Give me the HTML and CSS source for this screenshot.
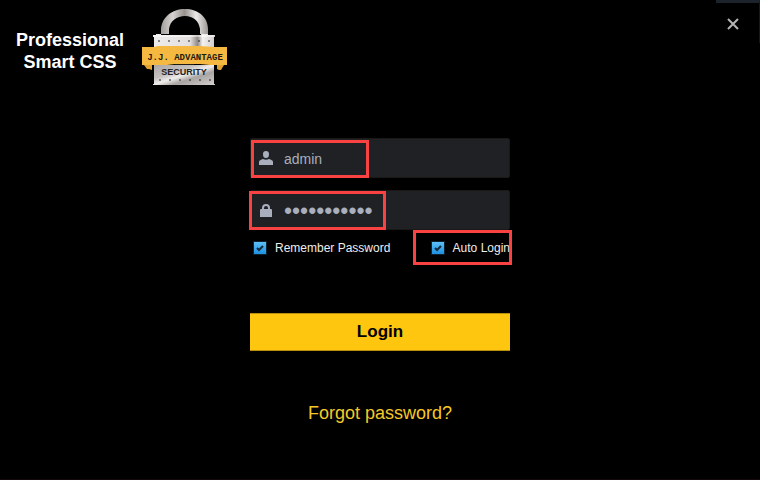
FILE: index.html
```html
<!DOCTYPE html>
<html lang="en">
<head>
    <meta charset="utf-8">
    <title>Professional Smart CSS</title>
    <meta name="viewport" content="width=device-width, initial-scale=1.0">
    <link rel="stylesheet" href="styles.css">
</head>
<body>
    <header>
        <h1>Professional<br>Smart CSS</h1>
        <svg class="logo" width="88" height="80" viewBox="0 0 88 80" role="img" aria-label="J.J. Advantage Security">
            <defs>
                <linearGradient id="steel" x1="0" y1="0" x2="1" y2="1">
                    <stop offset="0" stop-color="#a9a6a5"/>
                    <stop offset="0.35" stop-color="#c4c1c0"/>
                    <stop offset="0.5" stop-color="#f0eeed"/>
                    <stop offset="0.65" stop-color="#a9a5a3"/>
                    <stop offset="1" stop-color="#d4d1d0"/>
                </linearGradient>
                <linearGradient id="plate" x1="0" y1="0" x2="1" y2="0">
                    <stop offset="0" stop-color="#efedec"/>
                    <stop offset="0.6" stop-color="#e2dfde"/>
                    <stop offset="0.72" stop-color="#8f8a88"/>
                    <stop offset="0.8" stop-color="#f4f2f1"/>
                    <stop offset="1" stop-color="#cfcbca"/>
                </linearGradient>
                <linearGradient id="shackle" x1="0" y1="0" x2="1" y2="0">
                    <stop offset="0" stop-color="#a29e9c"/>
                    <stop offset="0.25" stop-color="#d6d3d2"/>
                    <stop offset="0.5" stop-color="#98928f"/>
                    <stop offset="0.75" stop-color="#eceae9"/>
                    <stop offset="1" stop-color="#9b9795"/>
                </linearGradient>
            </defs>
            <path d="M19 26V21C20 9 30 1 43 1s23 8 23 20v5h-8v-5C57 13 51 8 43 8s-15 5-16 13v5z" fill="url(#shackle)"/>
            <path d="M11 27h3v-1h5v1h40v-1h7v1h7v2h-1v10H12V29h-1z" fill="url(#plate)"/>
            <path d="M12 28h60" stroke="#fff" stroke-width="1"/>
            <path d="M16 33h54" stroke="#222" stroke-width="1" stroke-dasharray="2 8"/>
            <path d="M2 57h8v5l-3-1H5zM75 57h7l-3 5h-2l-2-1z" fill="#e0a233"/>
            <path d="M12 57h60v19h1v1H11v-1h1z" fill="url(#steel)"/>
            <path d="M17 72h54" stroke="#222" stroke-width="1" stroke-dasharray="2 8"/>
            <path d="M0 39h12l4-1h42l14 1h13v18H68l-10-1H33l-8 1H0z" fill="#f5b942"/>
            <path d="M33 56h19v1H33z" fill="#211b16"/>
            <text x="43" y="52" text-anchor="middle" class="logo-name">J.J. ADVANTAGE</text>
            <text x="42" y="67" text-anchor="middle" class="logo-sub">SECURITY</text>
        </svg>
        <button class="close" type="button" aria-label="Close">
            <svg width="12" height="12" viewBox="0 0 12 12"><path d="M1 1l10 10M11 1L1 11" stroke="#b4b4b4" stroke-width="2"/></svg>
        </button>
    </header>
    <div class="window-edge"></div>

    <main>
        <form onsubmit="return false">
            <div class="field">
                <svg width="14" height="14" viewBox="0 0 14 14" fill="#a9afbc"><path d="M7 0c2 0 3 1 3 3 0 3-1 4-3 4S4 6 4 3c0-2 1-3 3-3zM0 14v-3c0-2 2-2 4-3 2 1 4 1 6 0 2 1 4 1 4 3v3z"/></svg>
                <input type="text" value="admin" aria-label="Username">
                <span class="mark mark-user"></span>
            </div>
            <div class="field">
                <svg width="14" height="14" viewBox="0 0 14 14" fill="#a9afbc"><path fill-rule="evenodd" d="M3 6V5a4 4 0 0 1 8 0v1h1q1 0 1 1v7H1V7q0-1 1-1zM5 6h4V5a2 2 0 0 0-4 0z"/></svg>
                <input type="password" value="adminadmin1" aria-label="Password">
                <span class="mark mark-password"></span>
            </div>
            <div class="options">
                <label><input type="checkbox" checked>Remember Password</label>
                <label><input type="checkbox" checked>Auto Login<span class="mark mark-auto"></span></label>
            </div>
            <button class="login" type="submit">Login</button>
            <a class="forgot" href="#">Forgot password?</a>
        </form>
    </main>
</body>
</html>
```
FILE: styles.css
```css
* {
    box-sizing: border-box;
}

body {
    margin: 0;
    min-height: 100vh;
    background-color: #000;
    border-bottom: 1px solid #12070b;
    font-family: "Liberation Sans", Arial, sans-serif;
}

header {
    display: flex;
    align-items: flex-start;
    padding: 8px 20px 0 16px;
}

h1 {
    margin: 21px 0 0;
    color: #fff;
    font-size: 18px;
    line-height: 22px;
    text-align: center;
}

.logo {
    margin-left: 18px;
}

.logo-name {
    font: bold 9px "Liberation Mono", monospace;
    fill: #241a10;
}

.logo-sub {
    font: bold 9px "Liberation Sans", sans-serif;
    fill: #222;
}

.close {
    display: flex;
    margin-left: auto;
    margin-top: 9px;
    padding: 1px;
    border: 0;
    background: none;
}

/* sliver of the desktop behind the window */
.window-edge {
    position: absolute;
    top: 0;
    right: 0;
    width: 44px;
    height: 43px;
    border-top: 3px solid #1d232b;
    border-right: 1px solid #14181d;
    pointer-events: none;
}

form {
    display: flex;
    flex-direction: column;
    width: 260px;
    margin: 50px auto 0;
}

.field {
    position: relative;
    display: flex;
    align-items: center;
    height: 40px;
    margin-bottom: 12px;
    padding-left: 8px;
    background-color: #202124;
    border: 1px solid #191a17;
    border-radius: 2px;
}

.field + .field {
    margin-bottom: 10px;
}

.field input {
    flex: 1;
    min-width: 0;
    margin-left: 11px;
    padding: 2px 0 0;
    border: 0;
    outline: 0;
    background: none;
    color: #a9afbc;
    font: 14px "Liberation Sans", Arial, sans-serif;
}

.field input[type="password"] {
    font-size: 23px;
}

.options {
    display: flex;
    justify-content: space-between;
    padding-left: 3px;
}

label {
    position: relative;
    display: flex;
    align-items: center;
    height: 16px;
    color: #eee;
    font-size: 12px;
    white-space: nowrap;
}

input[type="checkbox"] {
    appearance: none;
    width: 14px;
    height: 14px;
    margin: 0 8px 0 0;
    border: 1px solid #0e2230;
    background: url("data:image/svg+xml,%3Csvg xmlns='http://www.w3.org/2000/svg' viewBox='0 0 12 12'%3E%3Cpath d='M3 6l2 2 4-4' fill='none' stroke='%23152a3a' stroke-width='2'/%3E%3C/svg%3E"), linear-gradient(#5cc0f8, #1e90e0);
}

/* highlighted areas */
.mark {
    position: absolute;
    border: 3px solid #fa4242;
    pointer-events: none;
}

.mark-user {
    top: 1px;
    left: 0;
    width: 118px;
    height: 38px;
}

.mark-password {
    top: 0;
    left: -2px;
    width: 137px;
    height: 39px;
}

.mark-auto {
    top: -10px;
    right: -2px;
    width: 99px;
    height: 35px;
}

.login {
    height: 38px;
    margin-top: 57px;
    border: 0;
    border-top: 1px solid #b98f0d;
    border-bottom: 1px solid #b98f0d;
    background-color: #ffc60f;
    color: #000;
    font: bold 17px "Liberation Sans", Arial, sans-serif;
}

.forgot {
    align-self: center;
    margin-top: 51px;
    color: #f5c927;
    font-size: 18px;
    line-height: 22px;
    text-decoration: none;
}
```
